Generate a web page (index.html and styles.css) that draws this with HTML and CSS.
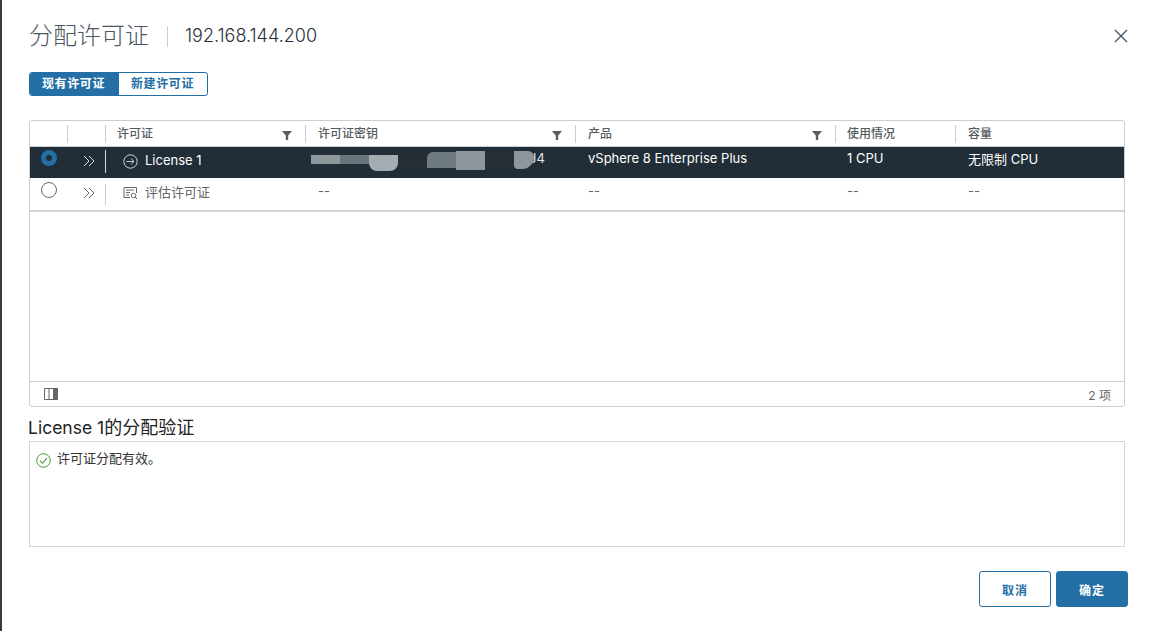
FILE: index.html
```html
<!DOCTYPE html>
<html lang="zh-CN">
<head>
<meta charset="utf-8">
<title>分配许可证</title>
<link rel="stylesheet" href="styles.css">
</head>
<body>
<div class="modal">
  <header class="head">
    <h1 class="title">分配许可证</h1>
    <span class="subtitle">192.168.144.200</span>
    <svg class="close" width="14" height="14" viewBox="0 0 14 14"><path d="M1 1l12 12M13 1L1 13" fill="none" stroke="#3f525e" stroke-width="1.3"/></svg>
  </header>
  <div class="tabs">
    <span class="tab on">现有许可证</span>
    <span class="tab">新建许可证</span>
  </div>
  <section class="grid">
    <div class="row hdr">
      <div class="c c1 sep"></div>
      <div class="c c2 sep"></div>
      <div class="c c3 sep">许可证<svg class="flt" width="10" height="9" viewBox="0 0 10 9"><path d="M0 0h10L6.2 4.4V9H3.8V4.4z" fill="#565f66"/></svg></div>
      <div class="c c4 sep">许可证密钥<svg class="flt" width="10" height="9" viewBox="0 0 10 9"><path d="M0 0h10L6.2 4.4V9H3.8V4.4z" fill="#565f66"/></svg></div>
      <div class="c c5 sep">产品<svg class="flt" width="10" height="9" viewBox="0 0 10 9"><path d="M0 0h10L6.2 4.4V9H3.8V4.4z" fill="#565f66"/></svg></div>
      <div class="c c6 sep">使用情况</div>
      <div class="c c7">容量</div>
    </div>
    <div class="row sel">
      <div class="c c1"><span class="radio on"></span></div>
      <div class="c c2"><svg class="chev" width="12" height="12" viewBox="0 0 12 12"><path d="M1 1l5 5-5 5M6 1l5 5-5 5" fill="none" stroke="currentColor" stroke-width="1"/></svg><i class="bar"></i></div>
      <div class="c c3"><svg class="ic" width="15" height="15" viewBox="0 0 15 15"><circle cx="7.500" cy="7.500" r="6.700" fill="none" stroke="currentColor"/><path d="M3.500 7.500h7.500M8 4.600l3 2.900-3 2.900" fill="none" stroke="currentColor"/></svg>License 1</div>
      <div class="c c4 key"><span class="tail">J4</span>
        <i class="blot b1"></i><i class="blot b2"></i><i class="blot b3"></i><i class="blot d1"></i><i class="blot b4"></i><i class="blot b5"></i><i class="blot d2"></i><i class="blot b6"></i>
      </div>
      <div class="c c5">vSphere 8 Enterprise Plus</div>
      <div class="c c6">1 CPU</div>
      <div class="c c7">无限制 CPU</div>
    </div>
    <div class="row plain">
      <div class="c c1"><span class="radio"></span></div>
      <div class="c c2"><svg class="chev" width="12" height="12" viewBox="0 0 12 12"><path d="M1 1l5 5-5 5M6 1l5 5-5 5" fill="none" stroke="currentColor" stroke-width="1"/></svg><i class="bar"></i></div>
      <div class="c c3"><svg class="ic" width="15" height="15" viewBox="0 0 15 15"><path d="M7 12.500H1V2.500h12.500V8M3 5h8M3 7.500h4M3 10h3" fill="none" stroke="currentColor"/><circle cx="10.500" cy="10.500" r="2.200" fill="none" stroke="currentColor"/><path d="M12 12l2 2" stroke="currentColor"/></svg>评估许可证</div>
      <div class="c c4">--</div>
      <div class="c c5">--</div>
      <div class="c c6">--</div>
      <div class="c c7">--</div>
    </div>
    <div class="empty"></div>
    <footer class="foot">
      <svg class="cols" width="14" height="12" viewBox="0 0 14 12"><path d="M.5.500h13v11H.5zM5 .500v11M9.500.500v11" fill="none" stroke="#666"/><path d="M9.500.500h4v11h-4z" fill="#666"/></svg>
      <span>2 项</span>
    </footer>
  </section>
  <h2 class="vtitle">License 1<span class="vcjk">的分配验证</span></h2>
  <div class="vbox">
    <svg width="15" height="15" viewBox="0 0 15 15"><circle cx="7.500" cy="7.500" r="6.800" fill="none" stroke="#4f9a35"/><path d="M4 7.800l2.500 2.500L11 5.200" fill="none" stroke="#4f9a35" stroke-width="1.100"/></svg>
    <span>许可证分配有效。</span>
  </div>
  <div class="actions">
    <button class="btn ghost">取消</button>
    <button class="btn solid">确定</button>
  </div>
</div>
</body>
</html>
```
FILE: styles.css
```css
* { box-sizing: border-box; }
html, body { margin: 0; height: 100%; }
body {
  background: #3a3a3a;
  font-family: "Inter", "Noto Sans CJK SC", sans-serif;
  overflow: hidden;
}
.modal {
  margin-left: 2px;
  height: 631px;
  background: #fff;
  padding: 0 27px;
  display: flex;
  flex-direction: column;
}
.head {
  height: 72px;
  display: flex;
  align-items: center;
  padding-bottom: 1px;
}
.title {
  margin: 0;
  font-size: 24px;
  font-weight: 300;
  color: #4a5660;
  line-height: 30px;
  padding-right: 19px;
  position: relative;
}
.title::after {
  content: "";
  position: absolute;
  right: 0;
  top: 5px;
  bottom: 4px;
  width: 1px;
  background: #c8cfd3;
}
.subtitle {
  margin-left: 17px;
  font-size: 18px;
  font-weight: 300;
  color: #1f2f3a;
}
.close { margin-left: auto; margin-right: -3px; }
.tabs {
  display: flex;
  width: 179px;
  height: 24px;
  border: 1px solid #2470a6;
  border-radius: 3px;
  overflow: hidden;
}
.tab {
  flex: 0 0 auto;
  width: 89px;
  padding-right: 2px;
  font-size: 12px;
  font-weight: 700;
  letter-spacing: .6px;
  line-height: 22px;
  text-align: center;
  color: #2470a6;
}
.tab.on { background: #2470a6; color: #fff; }
.grid {
  margin-top: 24px;
  height: 287px;
  border: 1px solid #c9d0d5;
  border-radius: 3px;
  display: flex;
  flex-direction: column;
  font-size: 13px;
  color: #555;
}
.row { display: flex; flex: 0 0 auto; }
.c {
  position: relative;
  display: flex;
  align-items: center;
  padding-left: 12px;
}
.c1 { width: 38px; }
.c2 { width: 38px; }
.c3 { width: 200px; }
.c4 { width: 270px; }
.c5 { width: 260px; }
.c6 { width: 120px; padding-left: 11px; }
.c7 { flex: 1; }
.hdr {
  height: 26px;
  border-bottom: 1px solid #c9d0d5;
  font-weight: 500;
  font-size: 12px;
  color: #565c60;
}
.hdr .c { padding-bottom: 2px; }
.hdr .c3 { padding-left: 11px; }
.sep::after {
  content: "";
  position: absolute;
  right: 0;
  top: 4px;
  height: 18px;
  width: 1px;
  background: #c9d0d5;
}
.flt { position: absolute; right: 14px; top: 10px; }
.sel { height: 31px; background: #212e37; color: #fff; }
.sel .c { padding-bottom: 9px; }
.sel .c3 { padding-bottom: 5px; }
.sel .c7 { padding-bottom: 8px; }
.plain { height: 34px; color: #666; border-bottom: 2px solid #cfd4d7; }
.plain .c { padding-bottom: 6px; }
.sel .c3, .plain .c3 { padding-left: 17px; gap: 7px; }
.ic { margin-top: 3px; }
.sel .ic { color: #c9d0d4; }
.radio {
  position: absolute;
  left: 11px;
  top: 4px;
  width: 16px;
  height: 16px;
  border-radius: 50%;
  border: 1px solid #666;
  background: #fff;
}
.radio.on {
  border: 5.500px solid #2470a6;
  background: #212e37;
  top: 3px;
}
.chev { position: absolute; left: 15px; top: 9px; color: #666; }
.sel .chev { top: 8px; color: #d5d9dc; }
.bar {
  position: absolute;
  right: 0;
  top: 6px;
  height: 21px;
  width: 1px;
  background: #c9d0d5;
}
.sel .bar { top: 3px; height: 23px; background: #d5d9dc; }
.tail { position: absolute; left: 223px; top: 4px; line-height: 15px; color: #e3e7e9; }
.blot { position: absolute; display: block; }
.b1 { left: 5px; width: 29px; height: 9px; top: 8px; background: #8e979c; }
.b2 { left: 34px; width: 29px; height: 9px; top: 8px; background: #6a757b; }
.b3 { left: 63px; width: 29px; height: 16px; top: 8px; background: #a3adb1; border-radius: 0 0 8px 8px; }
.d1 { left: 92px; width: 29px; height: 14px; top: 7px; background: #262e33; }
.b4 { left: 121px; width: 29px; height: 16px; top: 5px; background: #707b80; border-radius: 6px 0 0 0; }
.b5 { left: 150px; width: 29px; height: 19px; top: 4px; background: #8d969a; }
.d2 { left: 179px; width: 29px; height: 19px; top: 4px; background: #262e33; }
.b6 { left: 208px; width: 20px; height: 18px; top: 4px; background: #8d969a; border-radius: 0 6px 12px 4px; }
.empty { flex: 1; }
.foot {
  height: 25px;
  border-top: 1px solid #c9d0d5;
  display: flex;
  align-items: center;
  justify-content: space-between;
  padding: 0 13px 0 14px;
  font-size: 12px;
  color: #666;
}
.vtitle {
  margin: 9px 0 0 -1px;
  height: 25px;
  font-size: 17.500px;
  font-weight: 400;
  line-height: 24px;
  color: #222;
}
.vcjk { font-size: 18px; line-height: 1; }
.vbox {
  height: 106px;
  border: 1px solid #d6d6d6;
  padding: 8px 6px;
  display: flex;
  align-items: flex-start;
  gap: 6px;
  font-size: 13px;
  line-height: 16px;
  color: #333;
}
.vbox svg { margin-top: 3px; }
.actions {
  display: flex;
  justify-content: flex-end;
  gap: 5px;
  margin-top: 24px;
  margin-right: -3px;
}
.btn {
  width: 72px;
  height: 36px;
  border-radius: 3px;
  border: 1px solid #2470a6;
  font-family: inherit;
  font-size: 12px;
  font-weight: 600;
  letter-spacing: 1px;
  padding: 0;
}
.ghost { background: #fff; color: #2470a6; }
.solid { background: #2470a6; color: #fff; }
```
